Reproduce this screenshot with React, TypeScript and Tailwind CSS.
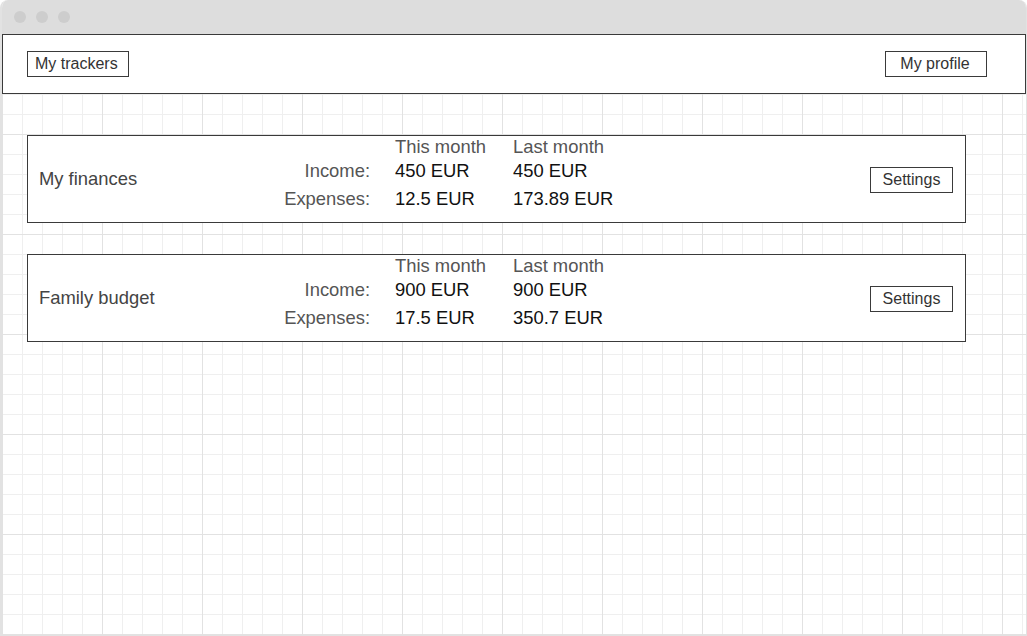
const trackers = [
  {
    name: "My finances",
    income: ["450 EUR", "450 EUR"],
    expenses: ["12.5 EUR", "173.89 EUR"],
  },
  {
    name: "Family budget",
    income: ["900 EUR", "900 EUR"],
    expenses: ["17.5 EUR", "350.7 EUR"],
  },
];

const TrackerCard = ({ name, income, expenses }: (typeof trackers)[number]) => {
  return (
    <div className="w-[939px] h-[88px] border border-[#3a3a3a] bg-white flex items-center pl-[11px] pr-[12px]">
      <p className="w-[200px] text-[18.4px] text-[#444]">{name}</p>
      <div className="self-start pt-[1px] flex flex-col text-[18.4px]">
        <div className="h-[20px] flex items-center text-[#555]">
          <span className="w-[131px]"></span>
          <span className="w-[118px] ml-[25px]">This month</span>
          <span>Last month</span>
        </div>
        <div className="h-[28px] flex items-center">
          <span className="w-[131px] text-right text-[#555]">Income:</span>
          <span className="w-[118px] ml-[25px] text-[#111]">{income[0]}</span>
          <span className="text-[#111]">{income[1]}</span>
        </div>
        <div className="h-[28px] flex items-center">
          <span className="w-[131px] text-right text-[#555]">Expenses:</span>
          <span className="w-[118px] ml-[25px] text-[#111]">{expenses[0]}</span>
          <span className="text-[#111]">{expenses[1]}</span>
        </div>
      </div>
      <button className="ml-auto mt-[1px] w-[83px] h-[26px] border border-[#3a3a3a] bg-white text-[16px] text-[#333] flex items-center justify-center">
        Settings
      </button>
    </div>
  );
};

export default function App() {
  return (
    <div className="w-[1027px] h-[636px] bg-white font-['Liberation_Sans',Arial,sans-serif]">
      <div className="w-full h-full flex flex-col rounded-t-[8px] overflow-hidden border-l-2 border-r border-b-2 border-[#e2e2e2]">
        {/* title bar */}
        <div className="h-[34px] shrink-0 bg-[#dddddd] flex items-center gap-[10px] pl-[12px] pb-[1px]">
          <span className="w-[12px] h-[12px] rounded-full bg-[#cdcdcd]"></span>
          <span className="w-[12px] h-[12px] rounded-full bg-[#cdcdcd]"></span>
          <span className="w-[12px] h-[12px] rounded-full bg-[#cdcdcd]"></span>
        </div>

        <div className="flex-1 bg-white bg-[linear-gradient(to_right,#e2e2e2_1px,transparent_1px),linear-gradient(to_bottom,#e2e2e2_1px,transparent_1px),linear-gradient(to_right,#efefef_1px,transparent_1px),linear-gradient(to_bottom,#efefef_1px,transparent_1px)] [background-size:100px_100px,100px_100px,20px_20px,20px_20px]">
          {/* header */}
          <div className="h-[60px] border border-[#3a3a3a] bg-white flex items-center justify-between pl-[24px] pr-[38px]">
            <button className="w-[102px] h-[26px] border border-[#3a3a3a] text-left pl-[7px] text-[16px] text-[#333]">
              My trackers
            </button>
            <button className="w-[102px] h-[26px] border border-[#3a3a3a] text-center pr-[2px] text-[16px] text-[#333]">
              My profile
            </button>
          </div>

          <div className="flex flex-col gap-[31px] pl-[25px] pt-[41px]">
            {trackers.map((t) => (
              <TrackerCard key={t.name} {...t} />
            ))}
          </div>
        </div>
      </div>
    </div>
  );
}
